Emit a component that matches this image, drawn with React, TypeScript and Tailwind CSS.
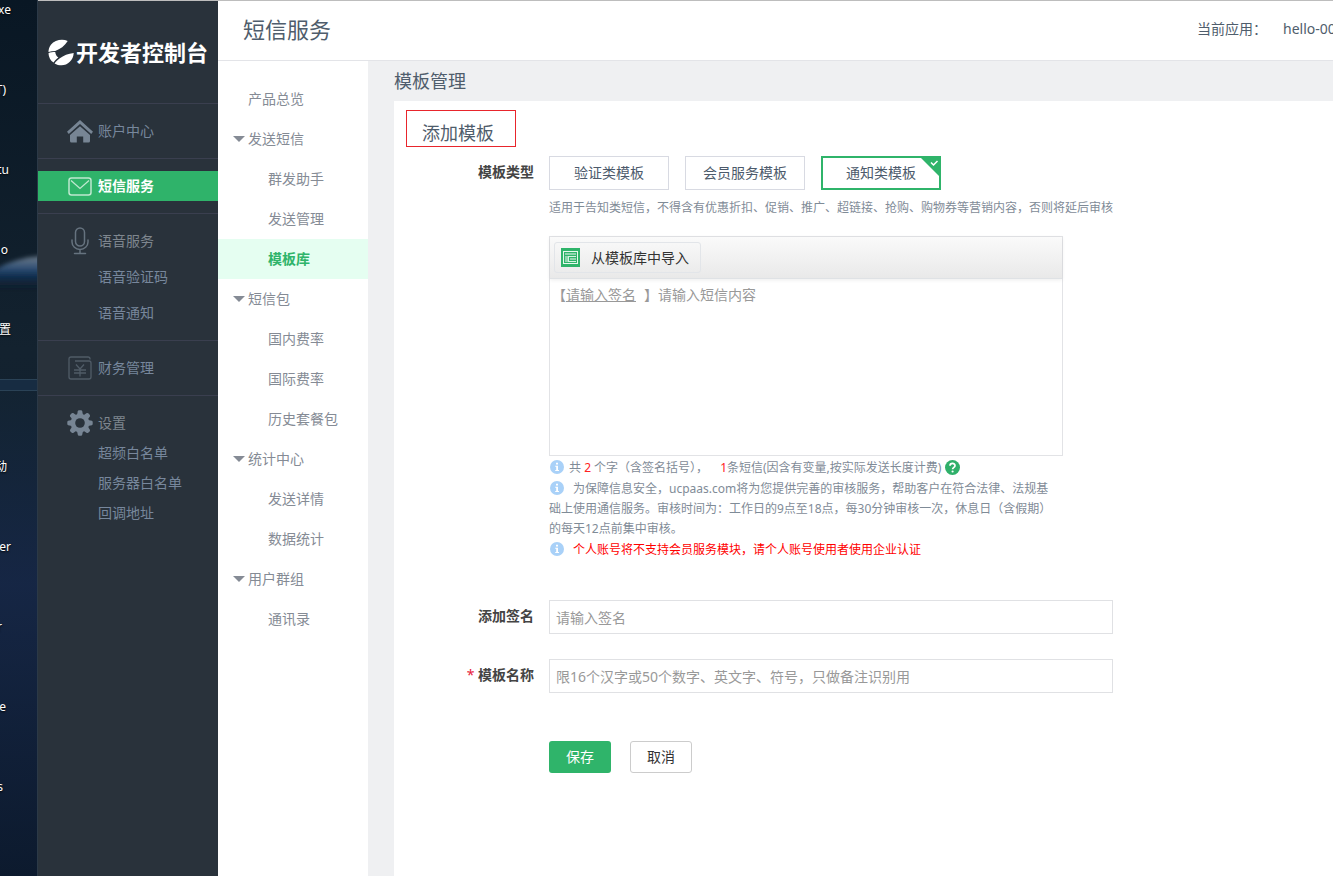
import type { ReactNode } from "react";
import clsx from "clsx";

const FONT = "font-['Noto_Sans','Noto_Sans_CJK_SC',sans-serif]";

function LogoIcon() {
  return (
    <svg width="26" height="27" viewBox="0 0 27 27" className="shrink-0" aria-hidden="true">
      <path d="M20.500 1.500 C15 -.8 7 .3 3 5.500 C1.300 7.800 .5 10.500 .5 13 C2.600 12.300 5 11.900 7.500 11.900 C12.500 10 17.500 6.500 20.500 1.500 Z" fill="#fff" />
      <path d="M.5 14.200 C2.500 13.500 5 13.100 7.500 13.100 C7.900 15.500 8.800 17.500 10.800 18.800 C8.500 20.500 6.800 22.300 5.800 24 C2.700 21.800 .6 18.300 .5 14.200 Z" fill="#fff" />
      <path d="M6.800 24.800 C8.200 22.900 10 21 12.300 19.500 C16 16.800 21 14.500 26.700 14 C26.400 21.500 20.500 26.800 14 26.800 C11.500 26.800 9 26.200 6.800 24.800 Z" fill="#fff" />
    </svg>
  );
}

function HomeIcon() {
  return (
    <svg width="26" height="24" viewBox="0 0 26 24" fill="#778594" aria-hidden="true">
      <path d="M13 1 L26 12.800 L24.200 15 L13 5 L1.800 15 L0 12.800 Z" />
      <path d="M13 7.200 L23 16 V22 Q23 23.500 21.500 23.500 H16.200 V17.500 H9.800 V23.500 H4.500 Q3 23.500 3 22 V16 Z" />
    </svg>
  );
}

function MailIcon() {
  return (
    <svg width="24" height="19" viewBox="0 0 24 19" fill="none" stroke="#bfe8d0" strokeWidth="1.500" aria-hidden="true">
      <rect x="1" y="1" width="22" height="17" rx="2.500" />
      <path d="M3 3.500 L12 11.500 L21 3.500" strokeWidth="1.300" />
    </svg>
  );
}

function MicIcon() {
  return (
    <svg width="18" height="28" viewBox="0 0 18 28" fill="none" stroke="#66737f" strokeWidth="1.500" strokeLinecap="round" aria-hidden="true">
      <rect x="4.500" y="1" width="9" height="18" rx="4.500" />
      <path d="M1 13 V15 A8 7.500 0 0 0 17 15 V13 M9 22.500 V26.500 M3.500 26.500 H14.500" />
    </svg>
  );
}

function FinanceIcon() {
  return (
    <svg width="24" height="24" viewBox="0 0 24 24" fill="none" stroke="#505c67" strokeWidth="1.300" aria-hidden="true">
      <path d="M22 3.500 V3 Q22 1 20 1 H3 Q1 1 1 3 V21 Q1 23 3 23 H21 Q23 23 23 21 V7 Q23 5 21 5 H7" />
      <path d="M8 8.500 L12 13 L16 8.500 M12 13 V20.500 M6 14 H18 M6 17 H18" />
    </svg>
  );
}

function GearIcon() {
  return (
    <svg width="26" height="26" viewBox="0 0 26 26" aria-hidden="true">
      <g fill="#778594">
        {[0, 45, 90, 135].map((a) => (
          <path key={a} d="M10.800 1.200 Q11 .3 12 .3 H14 Q15 .3 15.200 1.200 L16 5 V21 L15.200 24.800 Q15 25.700 14 25.700 H12 Q11 25.700 10.800 24.800 L10 21 V5 Z" transform={`rotate(${a} 13 13)`} />
        ))}
        <circle cx="13" cy="13" r="9.300" />
      </g>
      <circle cx="13" cy="13" r="4.800" fill="#29323b" />
    </svg>
  );
}

function ImportIcon() {
  return (
    <svg width="19" height="19" viewBox="0 0 19 19" className="shrink-0" aria-hidden="true">
      <rect width="19" height="19" fill="#2fb46a" />
      <rect x="2.500" y="3.500" width="14" height="12" fill="none" stroke="#e6f8ed" />
      <path d="M4 5 H15 V7 H4 Z" fill="#8fd6ae" />
      <path d="M4 8 H7 V14 H4 Z" fill="#8fd6ae" />
      <path d="M8 8.500 H15 M8 13.500 H15 M7.500 8 V14" stroke="#d5f3e1" />
      <path d="M9 10 H15 V12 H9 Z" fill="#8fd6ae" />
    </svg>
  );
}

function InfoIcon() {
  return (
    <svg width="14" height="14" viewBox="0 0 14 14" className="ml-px inline-block align-[-2px]" aria-hidden="true">
      <circle cx="7" cy="7" r="7" fill="#a9d1f8" />
      <path d="M6 2.800 H8 V4.600 H6 Z M5.200 5.800 H8 V10 H9 V11 H5.200 V10 H6.200 V6.800 H5.200 Z" fill="#fff" />
    </svg>
  );
}

function HelpIcon() {
  return (
    <svg width="15" height="15" viewBox="0 0 15 15" className="inline-block align-[-3px]" aria-hidden="true">
      <circle cx="7.500" cy="7.500" r="7.500" fill="#2fb06a" />
      <path d="M5 5.800 C5 2.700 10 2.700 10 5.700 C10 7.300 7.600 7.400 7.600 9.300" fill="none" stroke="#fff" strokeWidth="1.700" />
      <circle cx="7.600" cy="11.500" r="1.100" fill="#fff" />
    </svg>
  );
}

const desktopLabels = [
  { text: "xe", pos: "top-0 right-[26px]" },
  { text: "T)", pos: "top-20 right-[31px]" },
  { text: "tu", pos: "top-40 right-[28px]" },
  { text: "o", pos: "top-60 right-[29px]" },
  { text: "置", pos: "top-80 right-[26px]" },
  { text: "动", pos: "top-[457px] right-[30px]" },
  { text: "er", pos: "top-[537px] right-[26px]" },
  { text: "r", pos: "top-[617px] right-[35px]" },
  { text: "e", pos: "top-[697px] right-[31px]" },
  { text: "s", pos: "top-[777px] right-[34px]" },
];

function Desktop() {
  return (
    <div className="relative w-[38px] shrink-0 overflow-hidden border-r border-[#2b3947] bg-linear-to-b from-[#091724] via-[#13222f] via-40% to-[#0d1a2d]">
      <div className="absolute inset-x-0 top-[390px] bottom-0 bg-linear-to-b from-[#132433] via-[#17284a] via-40% to-[#0c1a2e] opacity-80" />
      <svg width="37" height="50" viewBox="0 0 37 50" className="absolute top-[250px] left-0" aria-hidden="true">
        <defs>
          <linearGradient id="glow" x1="0" y1="0" x2="0" y2="1">
            <stop offset="0" stopColor="#6f7c88" />
            <stop offset=".3" stopColor="#3a587a" />
            <stop offset=".55" stopColor="#123358" />
            <stop offset="1" stopColor="#122230" stopOpacity="0" />
          </linearGradient>
          <filter id="soft">
            <feGaussianBlur stdDeviation="2" />
          </filter>
        </defs>
        <path d="M-4 19 Q14 8 42 6 V40 H-4 Z" fill="url(#glow)" filter="url(#soft)" />
      </svg>
      <div className="absolute inset-x-0 top-[379px] h-3 border-y border-[#2a4256] bg-[#172c42]" />
      {desktopLabels.map((l) => (
        <span key={l.pos} className={clsx("absolute text-xs leading-5 whitespace-nowrap text-white [text-shadow:0_1px_2px_#000]", l.pos)}>
          {l.text}
        </span>
      ))}
    </div>
  );
}

type SideSectionProps = {
  icon: ReactNode;
  title: string;
  items?: string[];
  active?: boolean;
  muted?: boolean;
  loose?: boolean;
};

function SideSection({ icon, title, items = [], active, muted, loose }: SideSectionProps) {
  return (
    <div className={clsx("flex flex-col border-t border-[#3a3f4f] py-3", loose && "gap-[6px]")}>
      <a
        href="#"
        className={clsx(
          "flex h-[30px] items-center gap-1 pl-7",
          active ? "bg-[#2fb36a] font-bold text-white" : muted ? "text-[#7e868e]" : "text-[#77879c]"
        )}
      >
        <span className="flex w-7 justify-center">{icon}</span>
        {title}
      </a>
      {items.map((item) => (
        <a key={item} href="#" className="flex h-[30px] items-center pl-[60px] text-[#77879c]">
          {item}
        </a>
      ))}
    </div>
  );
}

function Sidebar() {
  return (
    <aside className="w-[180px] shrink-0 bg-[#29323b] text-sm">
      <div className="flex h-[102px] items-center justify-center gap-[2px] text-white">
        <LogoIcon />
        <span className="text-[22px] leading-8 font-bold whitespace-nowrap">开发者控制台</span>
      </div>
      <nav>
        <SideSection icon={<HomeIcon />} title="账户中心" />
        <SideSection icon={<MailIcon />} title="短信服务" active />
        <SideSection icon={<MicIcon />} title="语音服务" items={["语音验证码", "语音通知"]} muted loose />
        <SideSection icon={<FinanceIcon />} title="财务管理" />
        <SideSection icon={<GearIcon />} title="设置" items={["超频白名单", "服务器白名单", "回调地址"]} muted />
      </nav>
    </aside>
  );
}

const menu = [
  { title: "产品总览", items: [] },
  { title: "发送短信", items: ["群发助手", "发送管理", "模板库"] },
  { title: "短信包", items: ["国内费率", "国际费率", "历史套餐包"] },
  { title: "统计中心", items: ["发送详情", "数据统计"] },
  { title: "用户群组", items: ["通讯录"] },
];

function SubMenu() {
  return (
    <nav className="w-[150px] shrink-0 bg-white pt-[18px] text-sm text-[#858b95]">
      {menu.map((group) => (
        <div key={group.title}>
          <a href="#" className="flex h-10 items-center gap-[3px] pl-[15px]">
            <svg width="12" height="6" viewBox="0 0 12 6" fill="#858b95" aria-hidden="true">
              {group.items.length > 0 && <path d="M0 0 H12 L6 6 Z" />}
            </svg>
            {group.title}
          </a>
          {group.items.map((item) => (
            <a
              key={item}
              href="#"
              className={clsx("flex h-10 items-center pl-[50px]", item === "模板库" && "bg-[#e5fef1] font-bold text-[#2fb46a]")}
            >
              {item}
            </a>
          ))}
        </div>
      ))}
    </nav>
  );
}

function TypeButtons() {
  return (
    <div className="flex gap-4 text-[#4c5a6b]">
      <button type="button" className="h-[34px] w-[120px] border border-[#d8dae2]">
        验证类模板
      </button>
      <button type="button" className="h-[34px] w-[120px] border border-[#d8dae2]">
        会员服务模板
      </button>
      <button type="button" className="relative h-[34px] w-[120px] border-2 border-[#2fb46a]">
        通知类模板
        <svg width="18" height="18" viewBox="0 0 18 18" className="absolute top-0 right-0" aria-hidden="true">
          <path d="M0 0 H18 V18 Z" fill="#2fb46a" />
          <path d="M10 4.500 L12.500 7 L16.500 3" fill="none" stroke="#fff" strokeWidth="1.500" />
        </svg>
      </button>
    </div>
  );
}

function Editor() {
  return (
    <div className="h-[220px] w-[514px] border border-[#e2e3e6]">
      <div className="flex h-[42px] items-center border-b border-[#dfe2e5] bg-linear-to-b from-[#fafafa] to-[#e9e9e9] pl-1 shadow-[0_1px_4px_rgba(0,0,0,0.08)]">
        <button type="button" className="flex h-[31px] w-[147px] items-center gap-[11px] rounded-[3px] border border-[#e2e5e9] pl-[6px] text-[#333]">
          <ImportIcon />
          从模板库中导入
        </button>
      </div>
      <div className="flex pt-[6px] pl-[2px] leading-5 text-[#999]">
        <span>【</span>
        <input
          aria-label="签名"
          placeholder="请输入签名"
          className="h-5 w-[78px] underline outline-none placeholder:text-[#999] placeholder:underline"
        />
        <span>】</span>
        <textarea
          aria-label="短信内容"
          placeholder="请输入短信内容"
          className="h-[165px] flex-1 resize-none outline-none placeholder:text-[#999]"
        />
      </div>
    </div>
  );
}

function Notes() {
  return (
    <div className="flex w-[504px] flex-col gap-px text-xs leading-5 text-[#7f8b97]">
      <p className="whitespace-nowrap">
        <InfoIcon />
        <span className="ml-[5px]">
          共 <span className="text-[#f22]">2</span> 个字（含签名括号），
          <span className="ml-3 text-[#f22]">1</span>条短信(因含有变量,按实际发送长度计费)
        </span>{" "}
        <HelpIcon />
      </p>
      <p>
        <InfoIcon />
        <span className="ml-[9px]">
          为保障信息安全，ucpaas.com将为您提供完善的审核服务，帮助客户在符合法律、法规基础上使用通信服务。审核时间为：工作日的9点至18点，每30分钟审核一次，休息日（含假期）的每天12点前集中审核。
        </span>
      </p>
      <p className="text-[#f00]">
        <InfoIcon />
        <span className="ml-[9px]">个人账号将不支持会员服务模块，请个人账号使用者使用企业认证</span>
      </p>
    </div>
  );
}

const label = "text-right leading-8 font-bold text-[#444]";
const field = "h-[34px] w-full border border-[#e0e1e4] px-[6px] outline-none placeholder:text-[#999]";

function TemplateForm() {
  return (
    <form className="grid grid-cols-[140px_564px] gap-x-[15px] text-sm" onSubmit={(e) => e.preventDefault()}>
      <span className={label}>模板类型</span>
      <div>
        <TypeButtons />
        <p className="mt-2 text-xs leading-5 whitespace-nowrap text-[#7f8b97]">
          适用于告知类短信，不得含有优惠折扣、促销、推广、超链接、抢购、购物券等营销内容，否则将延后审核
        </p>
        <div className="mt-[18px]">
          <Editor />
        </div>
        <div className="mt-[2px]">
          <Notes />
        </div>
      </div>

      <label htmlFor="sign" className={clsx(label, "mt-10")}>
        添加签名
      </label>
      <div className="mt-10">
        <input id="sign" placeholder="请输入签名" className={field} />
      </div>

      <label htmlFor="name" className={clsx(label, "mt-[25px]")}>
        <span className="font-normal text-[#e6213c]">*</span> 模板名称
      </label>
      <div className="mt-[25px]">
        <input id="name" placeholder="限16个汉字或50个数字、英文字、符号，只做备注识别用" className={field} />
      </div>

      <div className="col-start-2 mt-12 flex gap-[19px]">
        <button type="submit" className="h-8 w-[62px] rounded-[3px] bg-[#2fb46a] text-white">
          保存
        </button>
        <button type="button" className="h-8 w-[62px] rounded-[3px] border border-[#ccc] text-[#333]">
          取消
        </button>
      </div>
    </form>
  );
}

export default function App() {
  return (
    <div className={clsx("flex min-h-screen overflow-hidden bg-white", FONT)}>
      <Desktop />
      <div className="flex min-w-0 flex-1 border-t border-[#bdbdbd]">
        <Sidebar />
        <div className="flex min-w-0 flex-1 flex-col">
          <header className="flex h-[60px] items-center justify-between border-b border-[#e3e4e8] pb-1 pl-[25px] text-[#4f5d6c]">
            <h1 className="text-[22px] leading-8">短信服务</h1>
            <div className="flex w-[136px] gap-4 overflow-hidden text-sm whitespace-nowrap">
              <span>当前应用：</span>
              <span>hello-00</span>
            </div>
          </header>
          <div className="flex flex-1">
            <SubMenu />
            <main className="flex min-w-0 flex-1 flex-col bg-[#eff0f2] pl-[26px]">
              <h2 className="text-lg leading-10 text-[#4f5d6c]">模板管理</h2>
              <section className="flex-1 overflow-hidden bg-white">
                <h3 className="mt-[9px] mb-[9px] ml-3 h-[37px] w-[110px] border border-[#e8252c] pt-2 pl-[15px] text-lg leading-7 text-[#4f5d6c]">
                  添加模板
                </h3>
                <TemplateForm />
              </section>
            </main>
          </div>
        </div>
      </div>
    </div>
  );
}
